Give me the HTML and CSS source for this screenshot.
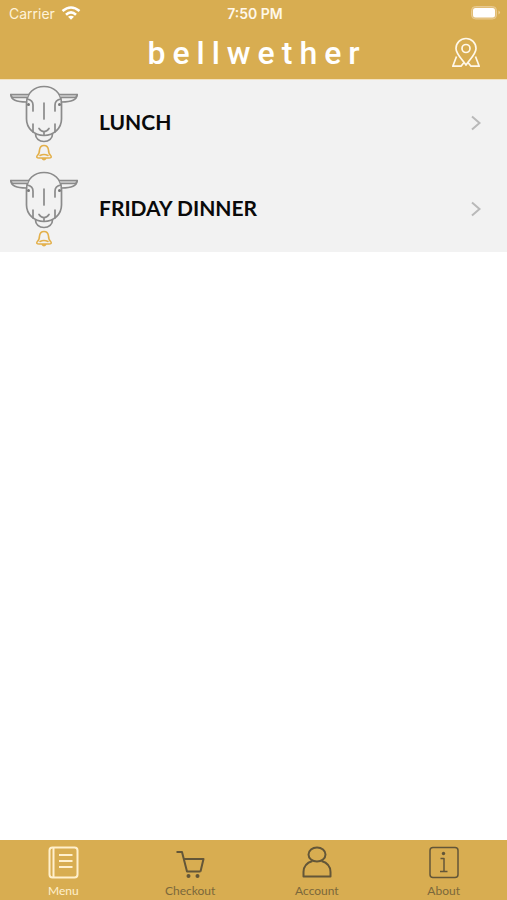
FILE: index.html
```html
<!DOCTYPE html>
<html lang="en">
<head>
    <meta charset="UTF-8">
    <meta name="viewport" content="width=device-width, initial-scale=1.0">
    <title>Bellwether - Menu</title>
    <link rel="stylesheet" href="styles.css">
</head>
<body>

    <svg class="sprite" aria-hidden="true">
        <symbol id="sheep" viewBox="0 0 68 76">
            <g fill="none" stroke="#8b8b8b" stroke-width="1.700" stroke-linecap="round" stroke-linejoin="round">
                <path d="M16.500 18C17 8 24 1.500 34 1.500S51 8 51.500 18V34C51.500 43 44 50.500 34 50.500S16.500 43 16.500 34Z"/>
                <path fill="#d0d0d0" d="M18.500 9.500H.8L2 12.500H17"/>
                <path d="M.8 9.500C1.500 15 6 17 16.500 17"/>
                <path fill="#d0d0d0" d="M49.500 9.500H67.200L66 12.500H51"/>
                <path d="M67.200 9.500C66.500 15 62 17 51.500 17"/>
                <path d="M17 14Q23 15 23 20V26M51 14Q45 15 45 20V26M34 18V34"/>
                <path d="M23 39V47M45 39V47M29 43.500Q31 46.500 34 46.500T39 43.500M34 46.500V50"/>
                <path d="M25.500 49C25.500 53.500 29 56.500 34 56.500S42.500 53.500 42.500 49"/>
            </g>
            <circle cx="18.500" cy="19.500" r="1.500" fill="#777"/>
            <circle cx="49.500" cy="19.500" r="1.500" fill="#777"/>
            <g fill="none" stroke="#e3b04b" stroke-width="1.600" stroke-linecap="round" stroke-linejoin="round">
                <path d="M27 71Q29.500 69 29.500 65Q30 60.500 34 60.500T38.500 65Q38.500 69 41 71Q42 73 39 73H29Q26 73 27 71ZM30 70.500Q34 68.500 38 70.500M32 73Q34 76.500 36 73"/>
            </g>
        </symbol>
    </svg>

    <header class="header">
        <div class="status">
            <div class="carrier">
                <span>Carrier</span>
                <svg width="20" height="14" viewBox="0 0 20 14" fill="none" stroke="#fff" stroke-width="2.600">
                    <path d="M1.500 5Q10-2 18.500 5M5 8.700Q10 4 15 8.700"/>
                    <path d="M7 10.800Q10 8.500 13 10.800L10 13.800Z" fill="#fff" stroke="none"/>
                </svg>
            </div>
            <div class="time">7:50 PM</div>
            <svg class="battery" width="30" height="14" viewBox="0 0 30 14">
                <rect x=".5" y=".5" width="25" height="12.500" rx="4" fill="#e2bd76" stroke="#e8ca90"/>
                <rect x="2" y="2" width="22" height="9.500" rx="2.500" fill="#fff"/>
                <path d="M27.500 4.500Q30.500 6.500 27.500 8.500Z" fill="#ecd09a"/>
            </svg>
        </div>
        <div class="brand">
            <h1>bellwether</h1>
            <button class="map-btn" aria-label="Locations">
                <svg width="30" height="32" viewBox="0 0 30 32" fill="none" stroke="#fff8ea" stroke-width="1.700" stroke-linejoin="round">
                    <path d="M15 28C11 22 5 17 5 11.500A10 10 0 0 1 25 11.500C25 17 19 22 15 28Z"/>
                    <circle cx="15" cy="11.500" r="4"/>
                    <path d="M5.500 19.500L1.800 29.200H10L13 25.500M24.500 19.500L28.200 29.200H20L17 25.500"/>
                </svg>
            </button>
        </div>
    </header>

    <main class="menu-list">
        <a class="menu-item" href="#lunch">
            <svg class="sheep" width="68" height="76"><use href="#sheep"/></svg>
            <span class="name">LUNCH</span>
            <svg class="chevron" width="10" height="16" viewBox="0 0 10 16"><path d="M1 1.500L8.500 8L1 14.500"/></svg>
        </a>
        <a class="menu-item" href="#friday-dinner">
            <svg class="sheep" width="68" height="76"><use href="#sheep"/></svg>
            <span class="name">FRIDAY DINNER</span>
            <svg class="chevron" width="10" height="16" viewBox="0 0 10 16"><path d="M1 1.500L8.500 8L1 14.500"/></svg>
        </a>
    </main>

    <nav class="tabs">
        <a class="tab selected" href="#menu">
            <svg width="32" height="34" viewBox="0 0 32 34">
                <rect x="2.500" y="2.500" width="28" height="30" rx="3"/>
                <path d="M6.500 2.500V32.500M12 10H25.500M12 16H25.500M12 22H25.500"/>
            </svg>
            <span>Menu</span>
        </a>
        <a class="tab" href="#checkout">
            <svg width="32" height="34" viewBox="0 0 32 34">
                <path d="M2.500 7H8L13 26.500H26.500M10 14H29.500L26.500 26.500"/>
                <circle class="dot" cx="14.500" cy="31" r="2"/>
                <circle class="dot" cx="23.500" cy="31" r="2"/>
            </svg>
            <span>Checkout</span>
        </a>
        <a class="tab" href="#account">
            <svg width="32" height="34" viewBox="0 0 32 34">
                <ellipse cx="16" cy="9.500" rx="8.500" ry="7"/>
                <path d="M11.500 16C5 18 2.500 22 2.500 27V31.500H29.500V27C29.500 22 27 18 20.500 16"/>
            </svg>
            <span>Account</span>
        </a>
        <a class="tab" href="#about">
            <svg class="thin" width="32" height="34" viewBox="0 0 32 34">
                <rect x="2" y="2.500" width="28" height="30" rx="3"/>
                <path d="M12.500 13.500H16V26.500M12 26.500H19.500"/>
                <circle class="dot" cx="15.500" cy="8.500" r="1.700"/>
            </svg>
            <span>About</span>
        </a>
    </nav>

</body>
</html>
```

FILE: styles.css
```css
* { box-sizing: border-box; }
body {
    margin: 0; min-height: 100vh; display: flex; flex-direction: column;
    background: #fff; font-family: Lato, "Liberation Sans", sans-serif;
}
a { text-decoration: none; color: inherit; }
svg { display: block; flex: none; }
.sprite { position: absolute; width: 0; height: 0; }

.header { background: #d8ad51; color: #fff; border-bottom: 1px solid #f3e2c0; }
.status {
    display: grid; grid-template-columns: 1fr auto 1fr; align-items: center;
    height: 26px; padding: 0 6px 0 9px;
    font-family: Inter, "Liberation Sans", sans-serif; font-size: 14px;
}
.carrier { display: flex; align-items: center; gap: 6px; color: #fff3da; }
.time { font-weight: 600; color: #fff8ea; }
.battery { justify-self: end; }
.brand {
    display: grid; grid-template-columns: 1fr auto 1fr; align-items: center;
    height: 53px; padding: 0 26px;
}
.brand h1 {
    grid-column: 2; margin: 0; padding-left: 7px; font-family: Roboto, sans-serif;
    font-size: 32px; font-weight: 500; line-height: 48px; letter-spacing: 7px;
}
.map-btn { justify-self: end; padding: 0; border: none; background: none; cursor: pointer; }

.menu-list { flex: 1; }
.menu-item {
    display: flex; align-items: center; height: 86px;
    padding: 0 26px 0 10px; background: #f2f2f2; color: #0a0a0a;
}
.name { flex: 1; margin-left: 21px; padding-bottom: 4px; font-size: 21px; font-weight: 700; }
.chevron { fill: none; stroke: #b9b9b9; stroke-width: 2; }

.tabs {
    display: grid; grid-template-columns: repeat(4, 1fr);
    height: 60px; padding-top: 5px; background: #d8ad51;
}
.tab { display: flex; flex-direction: column; align-items: center; gap: 4px; font-size: 12px; line-height: 16px; color: #7b683b; }
.tab svg { fill: none; stroke: #635638; stroke-width: 2; stroke-linejoin: round; }
.tab svg.thin { stroke-width: 1.5; }
.tab .dot { fill: #635638; stroke: none; }
.tab.selected { color: #fff0cd; }
.tab.selected svg { stroke: #fff0cd; }
```
